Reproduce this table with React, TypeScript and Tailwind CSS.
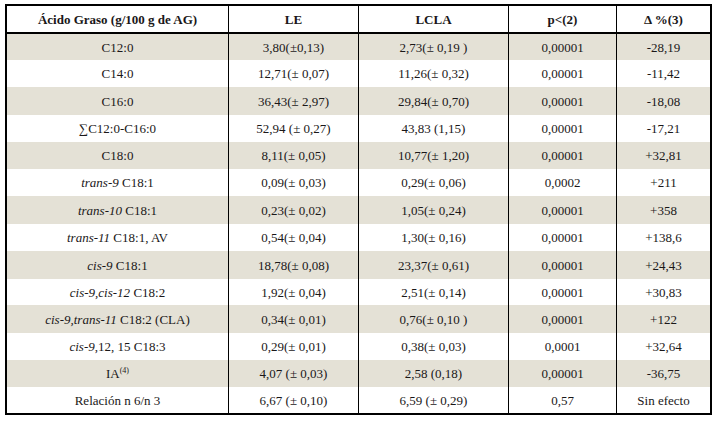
import React from "react";

type Row = { label: React.ReactNode; le: string; lcla: string; p: string; d: string; h: string; shaded: boolean };

const I = ({ children }: { children: React.ReactNode }) => <span className="italic">{children}</span>;

const rows: Row[] = [
  { label: "C12:0", le: "3,80(±0,13)", lcla: "2,73(± 0,19 )", p: "0,00001", d: "-28,19", h: "h-[26px]", shaded: true },
  { label: "C14:0", le: "12,71(± 0,07)", lcla: "11,26(± 0,32)", p: "0,00001", d: "-11,42", h: "h-[27px]", shaded: false },
  { label: "C16:0", le: "36,43(± 2,97)", lcla: "29,84(± 0,70)", p: "0,00001", d: "-18,08", h: "h-[28px]", shaded: true },
  { label: "∑C12:0-C16:0", le: "52,94 (± 0,27)", lcla: "43,83 (1,15)", p: "0,00001", d: "-17,21", h: "h-[27px]", shaded: false },
  { label: "C18:0", le: "8,11(± 0,05)", lcla: "10,77(± 1,20)", p: "0,00001", d: "+32,81", h: "h-[27px]", shaded: true },
  { label: <><I>trans-9</I> C18:1</>, le: "0,09(± 0,03)", lcla: "0,29(± 0,06)", p: "0,0002", d: "+211", h: "h-[27px]", shaded: false },
  { label: <><I>trans-10</I> C18:1</>, le: "0,23(± 0,02)", lcla: "1,05(± 0,24)", p: "0,00001", d: "+358", h: "h-[28px]", shaded: true },
  { label: <><I>trans-11</I> C18:1, AV</>, le: "0,54(± 0,04)", lcla: "1,30(± 0,16)", p: "0,00001", d: "+138,6", h: "h-[27px]", shaded: false },
  { label: <><I>cis-9</I> C18:1</>, le: "18,78(± 0,08)", lcla: "23,37(± 0,61)", p: "0,00001", d: "+24,43", h: "h-[28px]", shaded: true },
  { label: <><I>cis-9,cis-12</I> C18:2</>, le: "1,92(± 0,04)", lcla: "2,51(± 0,14)", p: "0,00001", d: "+30,83", h: "h-[26px]", shaded: false },
  { label: <><I>cis-9,trans-11</I> C18:2 (CLA)</>, le: "0,34(± 0,01)", lcla: "0,76(± 0,10 )", p: "0,00001", d: "+122", h: "h-[28px]", shaded: true },
  { label: <><I>cis-9</I>,12, 15 C18:3</>, le: "0,29(± 0,01)", lcla: "0,38(± 0,03)", p: "0,0001", d: "+32,64", h: "h-[27px]", shaded: false },
  { label: <>IA<span className="text-[8px] relative -top-[5px]">(4)</span></>, le: "4,07 (± 0,03)", lcla: "2,58 (0,18)", p: "0,00001", d: "-36,75", h: "h-[27px]", shaded: true },
  { label: "Relación n 6/n 3", le: "6,67 (± 0,10)", lcla: "6,59 (± 0,29)", p: "0,57", d: "Sin efecto", h: "h-[26px]", shaded: false },
];

const cell = "flex items-center justify-center border-r border-black";
const last = "flex items-center justify-center";

export default function App() {
  return (
    <div className="w-[718px] h-[423px] bg-white pt-[4px] pl-[5px] text-[#1a1718] text-[13px] leading-none" style={{ fontFamily: '"Liberation Serif", "Times New Roman", serif' }}>
      <div className="w-[707px] border-2 border-black">
        <div className="grid grid-cols-[222px_130px_150px_108px_93px] h-[28px] border-b-2 border-black font-bold bg-white">
          <div className={cell}>Ácido Graso (g/100 g de AG)</div>
          <div className={cell}>LE</div>
          <div className={cell}>LCLA</div>
          <div className={cell}>p&lt;(2)</div>
          <div className={last}>Δ %(3)</div>
        </div>
        {rows.map((r, i) => (
          <div key={i} className={`grid grid-cols-[222px_130px_150px_108px_93px] ${r.h} ${r.shaded ? "bg-[#e4e1d6]" : "bg-white"}`}>
            <div className={cell}><span>{r.label}</span></div>
            <div className={cell}>{r.le}</div>
            <div className={cell}>{r.lcla}</div>
            <div className={cell}>{r.p}</div>
            <div className={last}>{r.d}</div>
          </div>
        ))}
      </div>
    </div>
  );
}
